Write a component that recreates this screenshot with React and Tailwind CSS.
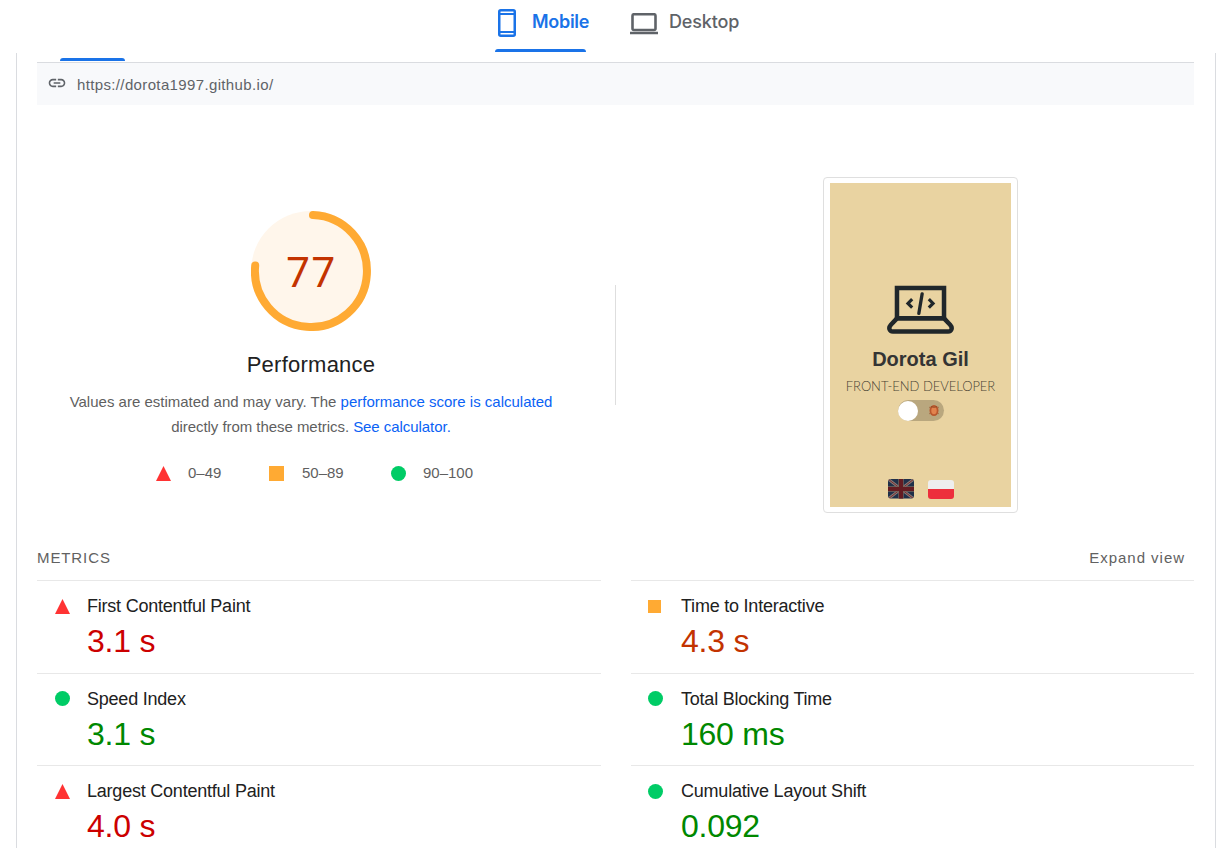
import React from "react";

const shapes = {
  fail: <path d="M7.5 0 15 15H0Z" fill="#ff3333" />,
  average: <path d="M0 1h13v13H0Z" fill="#ffaa33" />,
  pass: <circle cx="7.5" cy="7.5" r="7.5" fill="#00cc66" />,
};

const valueColor = {
  fail: "text-[#cc0000]",
  average: "text-[#c33300]",
  pass: "text-[#008800]",
};

function Mark({ kind }) {
  return (
    <svg width="15" height="15" viewBox="0 0 15 15" className="block shrink-0">
      {shapes[kind]}
    </svg>
  );
}

function Metric({ kind, label, value, markClass, rowClass }) {
  return (
    <div className={"flex border-t border-[#e8e8e8] " + rowClass}>
      <div className={"w-[50px] " + markClass}>
        <Mark kind={kind} />
      </div>
      <div>
        <div className="pt-[14px]">
          <div className="h-[22px] whitespace-nowrap text-[18px] leading-[22px] tracking-[-0.22px] text-[#212121]">{label}</div>
        </div>
        <div className={"pt-[4px] text-[32px] leading-[40px] tracking-[-0.25px] whitespace-nowrap " + valueColor[kind]}>{value}</div>
      </div>
    </div>
  );
}

function Tabs() {
  return (
    <header className="flex h-[53px] pl-[495px]">
      <div className="flex w-[91px] flex-col">
        <div className="flex h-[49px] pl-[3px] text-[#1a73e8]">
          <svg width="18" height="28" viewBox="0 0 18 28" fill="none" stroke="currentColor" className="mt-[9px] shrink-0">
            <rect x="1.25" y="1.25" width="15.5" height="25.5" rx="1.5" strokeWidth="2.5" />
            <path d="M1 5h16M1 23h16" strokeWidth="2" />
          </svg>
          <span className="ml-[16px] pt-[10px] font-[Inter,sans-serif] text-[18px] leading-6 font-semibold tracking-[-0.3px]">Mobile</span>
        </div>
        <div className="h-[3px] rounded-t-[3px] bg-[#1a73e8]" />
      </div>
      <div className="ml-[44px] flex text-[#5f6368]">
        <svg width="28" height="22" viewBox="0 0 28 22" fill="none" stroke="currentColor" className="mt-[13px] shrink-0">
          <rect x="2.5" y="1.25" width="23" height="15.75" rx="1.5" strokeWidth="2.6" />
          <path d="M0 20h28" strokeWidth="2.5" />
        </svg>
        <span className="ml-[11px] pt-[10px] font-[Inter,sans-serif] text-[18px] leading-6 font-medium tracking-[-0.15px]">Desktop</span>
      </div>
    </header>
  );
}

function Gauge() {
  return (
    <div className="grid h-[120px] w-[120px]">
      <svg width="120" height="120" viewBox="0 0 120 120" className="col-start-1 row-start-1">
        <circle cx="60" cy="60" r="60" fill="#fff6eb" />
        <path d="M62 4.04A56 56 0 1 1 4.2 54.6" fill="none" stroke="#ffaa33" strokeWidth="8" strokeLinecap="round" />
      </svg>
      <span className="col-start-1 row-start-1 self-center pt-[3px] pl-[1px] text-center font-[Roboto,sans-serif] text-[42px] leading-[48px] tracking-[1.7px] text-[#c33300]">77</span>
    </div>
  );
}

function Screenshot() {
  return (
    <div className="h-[336px] w-[195px] rounded-[4px] border border-[#dfdfdf] py-[5px] pl-[6px]">
      <div className="flex h-[324px] w-[181px] flex-col items-center bg-[#e9d3a1]">
        <svg width="67" height="49" viewBox="0 0 68 50" fill="none" stroke="#20272b" className="mt-[102px] shrink-0">
          <path d="M10 34V3h48v31Z" strokeWidth="4.6" />
          <path d="M10 34 3.800 40.500c-3 3.400-1.400 7 2 7h56.400c3.400 0 5-3.600 2-7L58 34Z" strokeWidth="4.600" strokeLinejoin="round" />
          <path d="m25.500 14.500-4.300 4.300 4.300 4.300M42.500 14.500l4.300 4.300-4.300 4.300" strokeWidth="3.200" />
          <path d="M35.700 9l-3.400 20" strokeWidth="3.400" strokeLinecap="round" />
        </svg>
        <div className="mt-[13px] h-[24px] whitespace-nowrap font-['Liberation_Sans',Arial,sans-serif] text-[20px] leading-[24px] font-bold text-[#343434]">Dorota Gil</div>
        <div className="mt-[7px] h-[16px] whitespace-nowrap font-[Lato,sans-serif] text-[13px] leading-[16px] font-light tracking-[-0.05px] text-[#4a4333]">FRONT-END DEVELOPER</div>
        <div className="mt-[6px] flex h-[21px] w-[46px] shrink-0 items-center justify-between rounded-full bg-[#b9a77e]">
          <span className="h-[20px] w-[20px] rounded-full bg-white" />
          <svg width="12" height="13" viewBox="0 0 12 13" className="mr-[4px]">
            <path d="M1 3 11 10M11 3 1 10" stroke="#a4744d" strokeWidth="1" />
            <ellipse cx="6" cy="6.500" rx="4.500" ry="5.500" fill="#b9582e" />
            <ellipse cx="6" cy="6.500" rx="2.700" ry="3.800" fill="#e2834e" />
            <path d="M3 2.700Q6 4 9 2.700" stroke="#8a4220" strokeWidth=".8" fill="none" />
          </svg>
        </div>
        <div className="mt-[58px] flex gap-[14px]">
          <svg width="26" height="20" viewBox="0 0 26 20">
            <defs>
              <clipPath id="uk"><rect width="26" height="19.500" rx="3" /></clipPath>
            </defs>
            <g clipPath="url(#uk)">
              <path d="M0 0h26v20H0Z" fill="#20304a" />
              <path d="m0 0 26 20M26 0 0 20" stroke="#857b77" strokeWidth="2.800" />
              <path d="m0 0 26 20M26 0 0 20" stroke="#7b2b30" strokeWidth="1" />
              <path d="M13 0v20M0 10h26" stroke="#75655d" strokeWidth="5.400" />
              <path d="M13 0v20M0 10h26" stroke="#651c22" strokeWidth="4" />
            </g>
          </svg>
          <div className="mt-[1px] flex h-[19px] w-[26px] flex-col overflow-hidden rounded-[3px]">
            <span className="h-[9px] bg-[#eeeeee]" />
            <span className="h-[10px] bg-[#ed2f3c]" />
          </div>
        </div>
      </div>
    </div>
  );
}

export default function App() {
  return (
    <div className="h-[848px] w-[1229px] overflow-hidden bg-white font-['Liberation_Sans',Arial,sans-serif]">
      <Tabs />
      <main className="ml-[16px] h-[795px] w-[1200px] border-x border-[#dadce0] pr-[21px] pl-[20px]">
        <div className="h-[9px] pt-[5px] pl-[23px]">
          <div className="h-[3px] w-[65px] rounded-t-[3px] bg-[#1a73e8]" />
        </div>
        <div className="flex h-[43px] border-t border-[#dadce0] bg-[#f8f9fb] pl-[10px] text-[#5f6368]">
          <svg width="20" height="20" viewBox="0 0 24 24" fill="currentColor" className="mt-[10px] shrink-0">
            <path d="M3.900 12c0-1.710 1.390-3.100 3.100-3.100h4V7H7c-2.760 0-5 2.240-5 5s2.240 5 5 5h4v-1.900H7c-1.710 0-3.100-1.390-3.100-3.100zM8 13h8v-2H8v2zm9-6h-4v1.900h4c1.710 0 3.100 1.390 3.100 3.100s-1.390 3.100-3.100 3.100h-4V17h4c2.760 0 5-2.240 5-5s-2.240-5-5-5z" />
          </svg>
          <span className="ml-[10px] pt-[12px] text-[15px] leading-[20px] tracking-[0.36px]">https://dorota1997.github.io/</span>
        </div>

        <section className="flex h-[443px]">
          <div className="flex w-[548px] flex-col items-center pt-[106px]">
            <Gauge />
            <h1 className="mt-[20px] text-[22px] leading-[28px] tracking-[0.25px] text-[#212121]">Performance</h1>
            <div className="mt-[10px] text-[15px] leading-[25px] text-[#5f5f5f]">
              <p className="text-center whitespace-nowrap">
                Values are estimated and may vary. The <a className="text-[#0a62f5]">performance score is calculated</a>
              </p>
              <p className="text-center tracking-[-0.05px] whitespace-nowrap">
                directly from these metrics. <a className="text-[#0a62f5]">See calculator.</a>
              </p>
            </div>
            <div className="mt-[24px] flex h-[20px] w-[310px] items-center text-[15px] leading-[20px] text-[#5f5f5f]">
              <div className="flex w-[113px] shrink-0 items-center gap-[17px]"><Mark kind="fail" /><span>0–49</span></div>
              <div className="flex w-[122px] shrink-0 items-center gap-[18px]">
                <span className="h-[15px] w-[15px] bg-[#ffaa33]" /><span>50–89</span>
              </div>
              <div className="flex shrink-0 items-center gap-[17px]"><Mark kind="pass" /><span className="whitespace-nowrap">90–100</span></div>
            </div>
          </div>
          <div className="mt-[180px] ml-[30px] h-[120px] w-px bg-[#dedede]" />
          <div className="mt-[72px] ml-[207px]">
            <Screenshot />
          </div>
        </section>

        <div className="flex h-[32px] justify-between pr-[9px] text-[15px] leading-[20px] text-[#616161]">
          <h2 className="tracking-[0.9px]">METRICS</h2>
          <button className="h-[20px] tracking-[0.97px]">Expand view</button>
        </div>
        <section className="grid grid-cols-[564px_563px] gap-x-[30px]">
          <Metric rowClass="h-[93px]" markClass="pt-[18px] pl-[18px]" kind="fail" label="First Contentful Paint" value="3.1 s" />
          <Metric rowClass="h-[93px]" markClass="pt-[18px] pl-[17px]" kind="average" label="Time to Interactive" value="4.3 s" />
          <Metric rowClass="h-[92px]" markClass="pt-[17px] pl-[18px]" kind="pass" label="Speed Index" value="3.1 s" />
          <Metric rowClass="h-[92px]" markClass="pt-[17px] pl-[17px]" kind="pass" label="Total Blocking Time" value="160 ms" />
          <Metric rowClass="h-[93px]" markClass="pt-[18px] pl-[18px]" kind="fail" label="Largest Contentful Paint" value="4.0 s" />
          <Metric rowClass="h-[93px]" markClass="pt-[18px] pl-[17px]" kind="pass" label="Cumulative Layout Shift" value="0.092" />
        </section>
      </main>
    </div>
  );
}
